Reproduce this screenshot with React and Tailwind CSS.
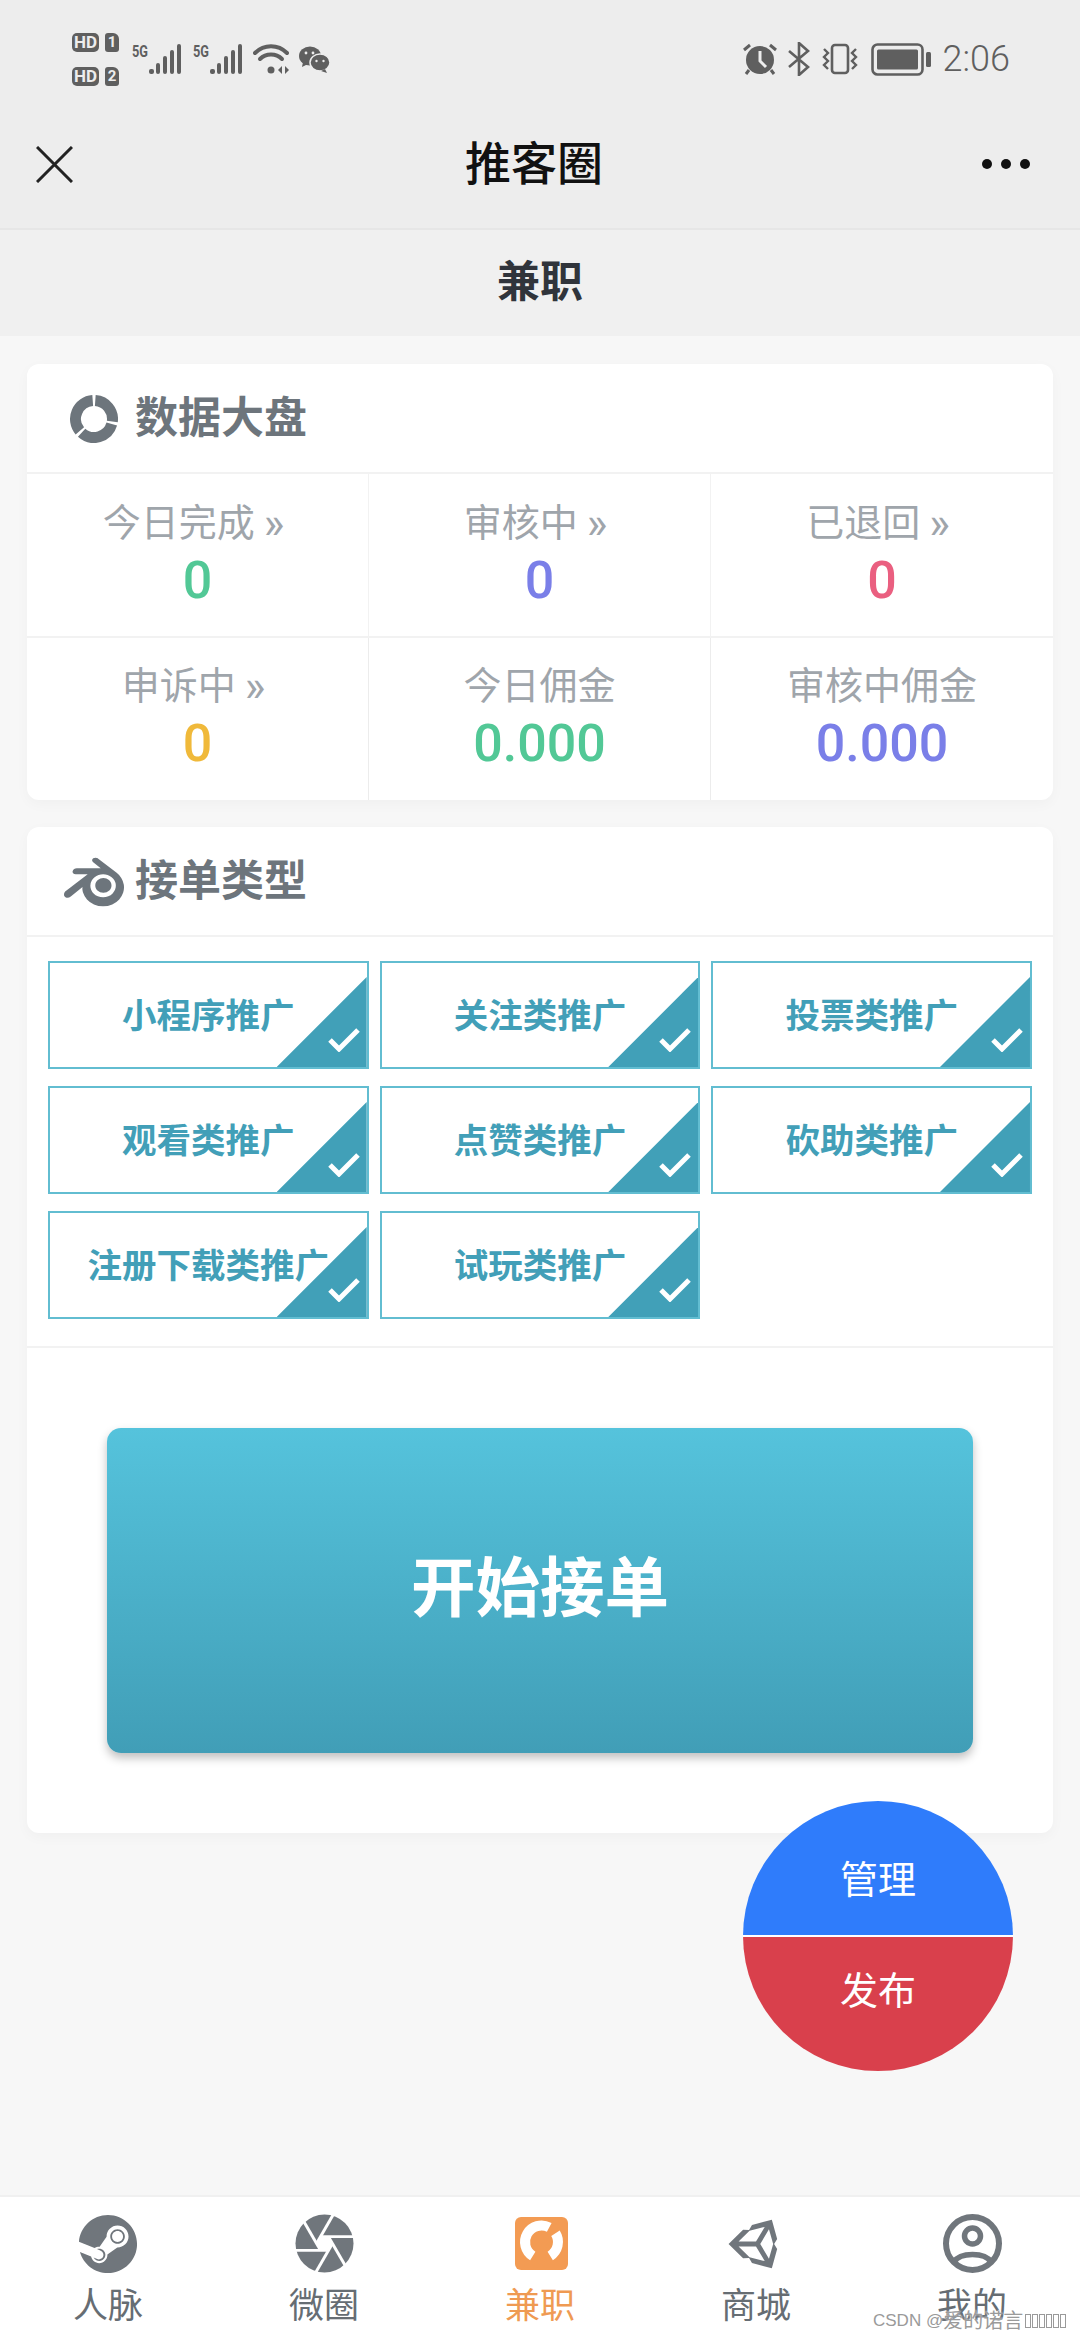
import React from 'react';
import { FaSteam, FaUnity } from 'react-icons/fa';
import { SiBlender } from 'react-icons/si';

const stats = [
  { label: '今日完成', value: '0', color: 'text-[#52c896]', more: true },
  { label: '审核中', value: '0', color: 'text-[#7a7fe8]', more: true },
  { label: '已退回', value: '0', color: 'text-[#ea5f80]', more: true },
  { label: '申诉中', value: '0', color: 'text-[#f0b93a]', more: true },
  { label: '今日佣金', value: '0.000', color: 'text-[#52c896]' },
  { label: '审核中佣金', value: '0.000', color: 'text-[#7a7fe8]' },
];

const tags = ['小程序推广', '关注类推广', '投票类推广', '观看类推广', '点赞类推广', '砍助类推广', '注册下载类推广', '试玩类推广'];

// arc between two clockwise angles (0 = 12 o'clock)
function arc(cx, cy, r, from, to) {
  const pt = (a) => {
    const t = (a * Math.PI) / 180;
    return `${(cx + r * Math.sin(t)).toFixed(2)} ${(cy - r * Math.cos(t)).toFixed(2)}`;
  };
  return `M${pt(from)}A${r} ${r} 0 ${to - from > 180 ? 1 : 0} 1 ${pt(to)}`;
}

function Signal() {
  return (
    <svg width="49" height="32" viewBox="0 0 49 32" fill="#5f5f5f">
      <text x="0" y="14" fontSize="16" fontWeight="700" fontFamily="Roboto" textLength="16" lengthAdjust="spacingAndGlyphs">5G</text>
      <rect x="17" y="26" width="5" height="5" rx="2" />
      <rect x="24" y="20" width="4" height="11" rx="2" />
      <rect x="31" y="13" width="4" height="18" rx="2" />
      <rect x="38" y="7" width="4" height="24" rx="2" />
      <rect x="45" y="1" width="4" height="30" rx="2" />
    </svg>
  );
}

function Sim({ n }) {
  return (
    <div className="flex items-center gap-[6px]">
      <span className="flex h-[19px] w-[27px] items-center justify-center rounded-[5px] bg-[#5f5f5f] text-[17px] font-bold leading-none text-[#ededed]">HD</span>
      <span className="flex h-[19px] w-[14px] items-center justify-center rounded-[3px] rounded-tr-[6px] bg-[#5f5f5f] text-[15px] font-bold leading-none text-[#ededed]">{n}</span>
    </div>
  );
}

function StatusBar() {
  return (
    <div className="flex h-[100px] items-center justify-between pl-[72px] pr-[70px] pt-[18px]">
      <div className="flex items-center">
        <div className="mr-[13px] flex flex-col gap-[15px]">
          <Sim n="1" />
          <Sim n="2" />
        </div>
        <Signal />
        <div className="ml-[12px]">
          <Signal />
        </div>
        <svg className="ml-[11px]" width="36" height="32" viewBox="0 0 36 32" fill="none" stroke="#5f5f5f" strokeLinecap="round">
          <path d="M2 10C11 1 25 1 34 10" strokeWidth="4" />
          <path d="M7 16C13 10 23 10 29 16" strokeWidth="4" />
          <circle cx="18" cy="27" r="3.5" fill="#5f5f5f" stroke="none" />
          <path d="M25 27l4-4v8zM32 23l4 4-4 4z" fill="#5f5f5f" stroke="none" />
        </svg>
        <svg className="ml-[10px]" width="31" height="27" viewBox="0 0 31 27" fill="#5f5f5f">
          <ellipse cx="11" cy="10" rx="11" ry="9.5" />
          <path d="M4 16l-1 5 6-3z" />
          <ellipse cx="21" cy="16.5" rx="10" ry="8.5" stroke="#ededed" strokeWidth="1.5" />
          <path d="M26 23l2 4-6-2z" />
          <circle cx="7" cy="7" r="1.4" fill="#ededed" />
          <circle cx="14" cy="7" r="1.4" fill="#ededed" />
          <circle cx="17.5" cy="15" r="1.2" fill="#ededed" />
          <circle cx="24.5" cy="15" r="1.2" fill="#ededed" />
        </svg>
      </div>
      <div className="flex items-center">
        <svg width="34" height="32" viewBox="0 0 34 32" fill="#5f5f5f">
          <circle cx="17" cy="17" r="14" />
          <path d="M17 8v10l6 6" fill="none" stroke="#ededed" strokeWidth="3" />
          <path d="M1 7l6-5M33 7l-6-5M6 27l-3 4M28 27l3 4" fill="none" stroke="#5f5f5f" strokeWidth="3" />
        </svg>
        <svg className="ml-[11px]" width="22" height="34" viewBox="0 0 22 34" fill="none" stroke="#5f5f5f" strokeWidth="2.6">
          <path d="M1 9l19 16-9 8V1l9 8L1 25" />
        </svg>
        <svg className="ml-[11px]" width="38" height="32" viewBox="0 0 38 32" fill="none" stroke="#5f5f5f" strokeWidth="2.6">
          <rect x="11" y="2" width="16" height="28" rx="3" />
          <path d="M3 6l4 4-4 4 4 4-4 4 4 4M35 6l-4 4 4 4-4 4 4 4-4 4" strokeWidth="2.4" />
        </svg>
        <svg className="ml-[12px]" width="60" height="33" viewBox="0 0 60 33" fill="none">
          <rect x="1.5" y="1.5" width="50" height="30" rx="5" stroke="#5f5f5f" strokeWidth="2.6" />
          <rect x="6" y="6.5" width="41" height="20" rx="1.5" fill="#5f5f5f" />
          <rect x="55" y="9" width="5" height="15" rx="1.5" fill="#5f5f5f" />
        </svg>
        <span className="ml-[12px] text-[36px] font-light leading-none text-[#5f5f5f]">2:06</span>
      </div>
    </div>
  );
}

function NavBar() {
  return (
    <div className="flex h-[130px] items-center justify-between border-b-2 border-[#e6e6e6] bg-[#ededed] pl-[36px] pr-[50px]">
      <svg width="37" height="37" viewBox="0 0 37 37" stroke="#222" strokeWidth="3">
        <path d="M1 1l35 35M36 1L1 36" />
      </svg>
      <h1 className="ml-[13px] text-[46px] font-medium leading-none text-[#111]">推客圈</h1>
      <div className="flex gap-[9px]">
        <span className="h-[10px] w-[10px] rounded-full bg-[#111]" />
        <span className="h-[10px] w-[10px] rounded-full bg-[#111]" />
        <span className="h-[10px] w-[10px] rounded-full bg-[#111]" />
      </div>
    </div>
  );
}

function CardTitle({ icon, title }) {
  return (
    <div className="flex h-[110px] items-center border-b-2 border-[#f2f2f2] pt-[1px] pl-[38px]">
      <div className="flex w-[70px] items-center">{icon}</div>
      <h2 className="text-[43px] font-bold leading-none text-[#6d757c]">{title}</h2>
    </div>
  );
}

function StatCell({ item, index }) {
  return (
    <div className={`flex flex-col items-center ${index % 3 !== 2 ? 'border-r border-[#ececec]' : ''} ${index < 3 ? 'border-b-2 border-[#f2f2f2] h-[164px] pt-[27px]' : 'h-[162px] pt-[26px]'}`}>
      <div className={`flex h-[44px] items-center text-[38px] leading-none text-[#9fa5ab] ${item.more ? 'pr-[8px]' : ''}`}>
        {item.label}
        {item.more && <span className="ml-[9px] text-[44px]">»</span>}
      </div>
      <div className={`mt-[6px] text-[52px] font-medium leading-[60px] ${item.color}`}>{item.value}</div>
    </div>
  );
}

function Tag({ label }) {
  return (
    <div className="relative flex h-[108px] items-center justify-center overflow-hidden border-2 border-[#62bdd1] pt-[2px]">
      <span className="relative z-10 whitespace-nowrap text-[34.5px] font-bold leading-none text-[#429fb8]">{label}</span>
      <div className="absolute bottom-0 right-0 h-[90px] w-[90px] bg-[#41a0b8] [clip-path:polygon(100%_0,100%_100%,0_100%)]" />
      <svg className="absolute bottom-[15px] right-[7px]" width="32" height="25" viewBox="0 0 32 25" fill="none" stroke="#fff" strokeWidth="5">
        <path d="M2 13l9 9L30 3" />
      </svg>
    </div>
  );
}

function BottomTab({ icon, label, active }) {
  return (
    <div className="flex flex-col items-center">
      <div className="flex h-[59px] items-center justify-center">{icon}</div>
      <span className={`mt-[14px] text-[35px] leading-[40px] ${active ? 'text-[#ef9a52]' : 'text-[#666d73]'}`}>{label}</span>
    </div>
  );
}

function Aperture() {
  return (
    <svg width="59" height="59" viewBox="-30 -30 60 60">
      <circle r="29.5" fill="#70767c" />
      <g stroke="#fff" strokeWidth="3">
        {[0, 60, 120, 180, 240, 300].map((deg) => (
          <line key={deg} x1="-4" y1="-7" x2="32" y2="-7" transform={`rotate(${deg})`} />
        ))}
      </g>
      <path d="M-4-7H4L8 0 4 7H-4L-8 0Z" fill="#fff" />
    </svg>
  );
}

export default function App() {
  return (
    <div className="relative flex h-[2340px] w-[1080px] flex-col overflow-hidden bg-[#f7f7f7] font-['Roboto','Noto_Sans_CJK_SC',sans-serif]">
      <div className="bg-[#ededed]">
        <StatusBar />
        <NavBar />
      </div>
      <div className="flex h-[106px] items-center justify-center bg-[#f0f0f0] pb-[2px]">
        <span className="text-[43px] font-bold leading-none text-[#30343b]">兼职</span>
      </div>

      <div className="flex flex-1 flex-col gap-[27px] px-[27px] pt-[28px]">
        <section className="rounded-[12px] bg-white shadow-[0_4px_14px_rgba(0,0,0,0.03)]">
          <CardTitle
            title="数据大盘"
            icon={
              <svg width="48" height="48" viewBox="0 0 48 48" fill="none" stroke="#6d757c" strokeWidth="11" className="ml-[5px]">
                <path d={arc(24, 24, 18.5, 4, 98)} />
                <path d={arc(24, 24, 18.5, 106, 222)} />
                <path d={arc(24, 24, 18.5, 230, 356)} />
              </svg>
            }
          />
          <div className="grid grid-cols-3">
            {stats.map((item, i) => (
              <StatCell key={item.label} item={item} index={i} />
            ))}
          </div>
        </section>

        <section className="flex h-[1006px] flex-col rounded-[12px] bg-white shadow-[0_4px_14px_rgba(0,0,0,0.03)]">
          <CardTitle title="接单类型" icon={<SiBlender className="-ml-[1px] text-[60px] text-[#6d757c]" />} />
          <div className="grid grid-cols-3 gap-x-[11px] gap-y-[17px] border-b-2 border-[#f2f2f2] px-[21px] pb-[27px] pt-[24px]">
            {tags.map((t) => (
              <Tag key={t} label={t} />
            ))}
          </div>
          <div className="px-[80px] pt-[80px]">
            <button className="flex h-[325px] w-full items-center justify-center rounded-[14px] bg-gradient-to-b from-[#55c3dc] to-[#419eb7] pb-[2px] text-[64.5px] font-bold leading-none text-white shadow-[0_5px_10px_rgba(0,0,0,0.25)]">
              开始接单
            </button>
          </div>
        </section>
      </div>

      <nav className="grid h-[145px] grid-cols-5 border-t-2 border-[#f0f0f0] bg-white pt-[17px]">
        <BottomTab label="人脉" icon={<FaSteam className="text-[60px] text-[#70767c]" />} />
        <BottomTab label="微圈" icon={<Aperture />} />
        <BottomTab
          label="兼职"
          active
          icon={
            <svg className="ml-[2px]" width="53" height="53" viewBox="0 0 53 53" fill="none">
              <rect width="53" height="53" rx="6" fill="#f39b53" />
              <path d={arc(26.5, 25, 16.5, 212, 388)} stroke="#fff" strokeWidth="10" />
              <path d={arc(26.5, 25, 16.5, 58, 148)} stroke="#fff" strokeWidth="10" />
            </svg>
          }
        />
        <BottomTab label="商城" icon={<FaUnity className="text-[58px] text-[#70767c]" />} />
        <BottomTab
          label="我的"
          icon={
            <svg width="59" height="59" viewBox="0 0 59 59" fill="none" stroke="#70767c" strokeWidth="6">
              <circle cx="29.5" cy="29.5" r="26.5" />
              <circle cx="29.5" cy="22" r="8" strokeWidth="5.5" />
              <path d="M11 48C17 38 42 38 48 48" strokeWidth="5.5" />
            </svg>
          }
        />
      </nav>

      {/* floating manage / publish button */}
      <div className="absolute left-[743px] top-[1801px] flex h-[270px] w-[270px] flex-col overflow-hidden rounded-full text-[38px] leading-none text-white">
        <div className="flex h-[134px] items-center justify-center bg-[#2f7cfb] pt-[24px]">管理</div>
        <div className="h-[2px] bg-white" />
        <div className="flex flex-1 items-center justify-center bg-[#d9404c] pb-[26px]">发布</div>
      </div>

      {/* csdn watermark */}
      <div className="absolute left-[873px] top-[2310px] flex items-center text-[#9a9a9a] [text-shadow:0_0_2px_#fff]">
        <span className="font-['Liberation_Sans'] text-[17px] leading-[22px]">CSDN @</span>
        <span className="text-[20px] leading-[22px]">爱的诺言</span>
        <div className="ml-[1px] flex">
          {[0, 1, 2, 3, 4, 5].map((i) => (
            <span key={i} className="ml-[1px] h-[14px] w-[6px] border border-[#9a9a9a]" />
          ))}
        </div>
      </div>
    </div>
  );
}
